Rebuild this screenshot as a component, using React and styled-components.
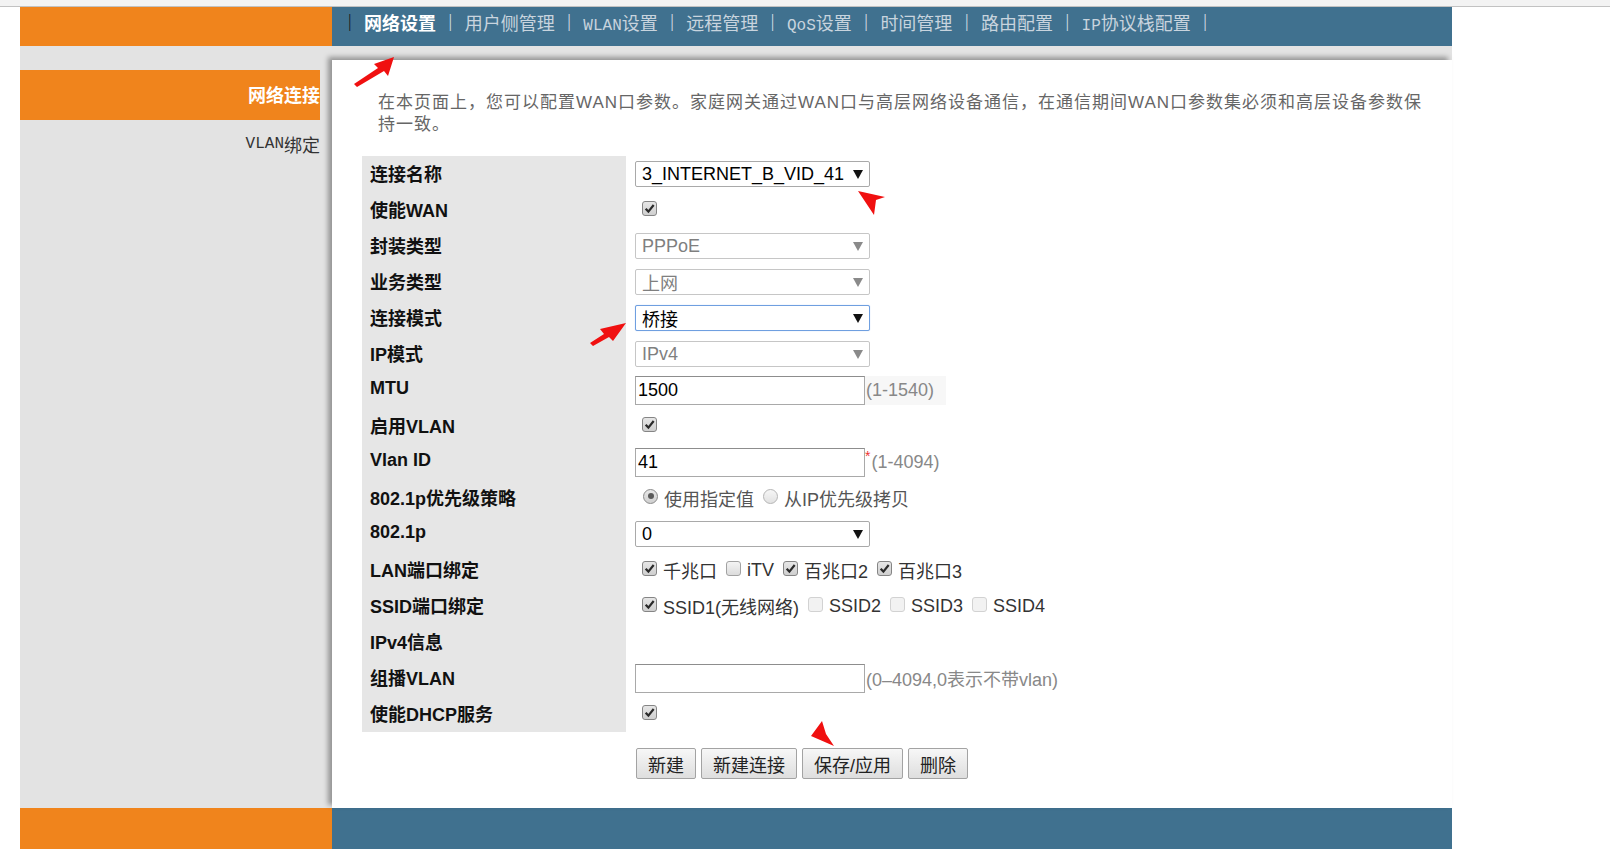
import React from 'react';
import styled, { createGlobalStyle, css } from 'styled-components';

const ORANGE = '#f0841c';
const BLUE = '#40718f';
const GREY = '#e3e3e3';
const SANS = `"Liberation Sans", "Noto Sans CJK SC", sans-serif`;
const SONG = `"Liberation Serif", "Noto Sans CJK SC", serif`;

const GlobalStyle = createGlobalStyle`
  html, body {
    margin: 0;
    padding: 0;
    background: #fff;
    overflow: hidden;
  }
  body {
    font-family: ${SANS};
  }
`;

const TopStrip = styled.div`
  height: 6px;
  background: #f3f3f3;
  border-bottom: 1px solid #c2c2c2;
`;

const Frame = styled.div`
  width: 1432px;
  margin-left: 20px;
`;

const Header = styled.div`
  display: grid;
  grid-template-columns: 312px 1120px;
  height: 39px;
`;

const Brand = styled.div`
  background: ${ORANGE};
`;

const Nav = styled.div`
  background: ${BLUE};
  display: flex;
  align-items: center;
  gap: 12.5px;
  padding: 0 0 10px 16px;
  font-family: ${SONG};
  font-size: 18px;
  color: #c8d4de;
  white-space: nowrap;
`;

const Sep = styled.span`
  color: ${(p) => (p.$dark ? '#1c1c1c' : '#d6dee5')};
`;

const NavItem = styled.span`
  ${(p) =>
    p.$active &&
    css`
      color: #fff;
      font-weight: bold;
    `}
`;

// SimSun-like half width latin
const Half = styled.span`
  font-family: "Liberation Mono", monospace;
  font-size: 16px;
`;

const Body = styled.div`
  position: relative;
  display: grid;
  grid-template-columns: 312px 1120px;
  height: 762px;
`;

const Sidebar = styled.div`
  background: ${GREY};
  padding-top: 24px;
`;

const SideLink = styled.div`
  width: 300px;
  height: 50px;
  box-sizing: border-box;
  padding-bottom: 3px;
  display: flex;
  align-items: center;
  justify-content: flex-end;
  overflow: hidden;
  font-family: ${SONG};
  font-size: 18px;
  color: #333;
  ${(p) =>
    p.$active &&
    css`
      background: ${ORANGE};
      color: #fff;
      font-weight: bold;
    `}
`;

const Main = styled.div`
  background: ${GREY};
  padding-top: 14px;
  display: flex;
  flex-direction: column;
`;

const Panel = styled.div`
  flex: 1;
  background: #fff;
  box-shadow: -4px -3px 5px rgba(0, 0, 0, 0.35);
  padding: 32px 30px 0 30px;
`;

const Intro = styled.p`
  margin: 0 0 20px;
  padding-left: 16px;
  width: 1050px;
  font-size: 17px;
  letter-spacing: 1px;
  line-height: 22px;
  color: #666;
`;

const FormGrid = styled.div`
  display: grid;
  grid-template-columns: 264px 700px;
  grid-auto-rows: 36px;
`;

const Label = styled.div`
  background: #e6e6e6;
  display: flex;
  align-items: center;
  padding: 0 0 3px 8px;
  font-size: 18px;
  font-weight: bold;
  color: #111;
`;

const Value = styled.div`
  display: flex;
  align-items: center;
  padding-left: 9px;
  font-size: 18px;
  color: #333;
  white-space: nowrap;
`;

const selectState = {
  normal: css`
    border-color: #a9a9a9;
    color: #000;
  `,
  disabled: css`
    border-color: #c6c6c6;
    color: #7f7f7f;
  `,
  focus: css`
    border-color: #6f9fe0;
    box-shadow: 0 0 1px #9fc1f0;
    color: #000;
  `,
};

const SelectBox = styled.div`
  box-sizing: border-box;
  width: 235px;
  height: 26px;
  border: 1px solid;
  border-radius: 2px;
  padding: 0 6px 0 6px;
  display: flex;
  align-items: center;
  justify-content: space-between;
  background: #fff;
  ${(p) => selectState[p.$state || 'normal']}
`;

const Caret = ({ color }) => (
  <svg width="10" height="9" viewBox="0 0 10 9">
    <polygon points="0,0 10,0 5,9" fill={color} />
  </svg>
);

const Select = ({ value, state = 'normal' }) => (
  <SelectBox $state={state}>
    <span>{value}</span>
    <Caret color={state === 'disabled' ? '#8a8a8a' : '#111'} />
  </SelectBox>
);

const TextInput = styled.input`
  box-sizing: border-box;
  width: 230px;
  height: 29px;
  margin: 0;
  padding: 0 2px;
  border: 1px solid #a9a9a9;
  border-top-color: #8d8d8d;
  font-family: ${SANS};
  font-size: 18px;
  color: #000;
  outline: none;
`;

const Hint = styled.span`
  display: inline-flex;
  align-items: center;
  height: 29px;
  padding: 0 12px 0 1px;
  color: #888;
  background: ${(p) => (p.$shade ? '#f7f7f7' : 'transparent')};
`;

const Star = styled.span`
  color: #e33;
  font-size: 14px;
  align-self: flex-start;
  margin-top: 4px;
`;

const Choices = styled.div`
  display: flex;
  align-items: center;
  padding-left: ${(p) => p.$indent || 7}px;
`;

const ChoiceText = styled.span`
  margin: 0 9px 0 6px;
  color: ${(p) => (p.$muted ? '#555' : '#333')};
`;

const boxLook = {
  on: css`
    border-color: #858585;
    background: linear-gradient(#e6e6e6, #cfcfcf);
  `,
  off: css`
    border-color: #a2a2a2;
    background: linear-gradient(#f4f4f4, #dcdcdc);
  `,
  disabled: css`
    border-color: #d2d2d2;
    background: #f2f2f2;
  `,
};

const Box = styled.span`
  box-sizing: border-box;
  width: 15px;
  height: 15px;
  border: 1px solid;
  border-radius: 3px;
  display: inline-flex;
  align-items: center;
  justify-content: center;
  flex: none;
  margin-top: -4px;
  ${(p) => boxLook[p.$look]}
`;

const Check = ({ look = 'on' }) => (
  <Box $look={look}>
    {look === 'on' && (
      <svg width="11" height="11" viewBox="0 0 10 10">
        <path d="M1.5 5.2 L4 7.8 L8.8 1.8" stroke="#2a2a2a" strokeWidth="2" fill="none" />
      </svg>
    )}
  </Box>
);

const Round = styled.span`
  box-sizing: border-box;
  width: 15px;
  height: 15px;
  border-radius: 50%;
  border: 1px solid ${(p) => (p.$on ? '#8a8a8a' : '#b5b5b5')};
  background: ${(p) => (p.$on ? 'linear-gradient(#e8e8e8, #cfcfcf)' : 'linear-gradient(#f6f6f6, #e2e2e2)')};
  display: inline-flex;
  align-items: center;
  justify-content: center;
  flex: none;
  margin-top: -4px;
  &::after {
    content: '';
    display: ${(p) => (p.$on ? 'block' : 'none')};
    width: 6px;
    height: 6px;
    border-radius: 50%;
    background: #5a5a5a;
  }
`;

const Actions = styled.div`
  display: flex;
  gap: 5px;
  margin: 16px 0 0 274px;
`;

const Button = styled.button`
  height: 31px;
  padding: 0 11px;
  border: 1px solid #a3a3a3;
  border-radius: 2px;
  background: linear-gradient(#f7f7f7, #dedede);
  font-family: ${SANS};
  font-size: 18px;
  color: #222;
`;

const Footer = styled.div`
  display: grid;
  grid-template-columns: 312px 1120px;
  height: 41px;
`;

const FootLeft = styled.div`
  background: ${ORANGE};
`;

const FootRight = styled.div`
  background: ${BLUE};
`;

// red annotation arrows drawn over the page
const Marker = styled.svg`
  position: absolute;
  left: ${(p) => p.$left}px;
  top: ${(p) => p.$top}px;
  pointer-events: none;
`;

const NAV = [
  ['网络设置'],
  ['用户侧管理'],
  ['WLAN', '设置'],
  ['远程管理'],
  ['QoS', '设置'],
  ['时间管理'],
  ['路由配置'],
  ['IP', '协议栈配置'],
];

const renderNavText = (parts) =>
  parts.length === 2 ? (
    <>
      <Half>{parts[0]}</Half>
      {parts[1]}
    </>
  ) : (
    parts[0]
  );

export default function App() {
  return (
    <>
      <GlobalStyle />
      <TopStrip />
      <Frame>
        <Header>
          <Brand />
          <Nav>
            <Sep $dark>|</Sep>
            {NAV.map((parts, i) => (
              <React.Fragment key={i}>
                <NavItem $active={i === 0}>{renderNavText(parts)}</NavItem>
                <Sep>|</Sep>
              </React.Fragment>
            ))}
          </Nav>
        </Header>

        <Body>
          <Sidebar>
            <SideLink $active>网络连接</SideLink>
            <SideLink>
              <Half>VLAN</Half>绑定
            </SideLink>
          </Sidebar>

          <Main>
            <Panel>
              <Intro>
                在本页面上，您可以配置WAN口参数。家庭网关通过WAN口与高层网络设备通信，在通信期间WAN口参数集必须和高层设备参数保持一致。
              </Intro>

              <FormGrid>
                <Label>连接名称</Label>
                <Value>
                  <Select value="3_INTERNET_B_VID_41" />
                </Value>

                <Label>使能WAN</Label>
                <Value>
                  <Choices>
                    <Check />
                  </Choices>
                </Value>

                <Label>封装类型</Label>
                <Value>
                  <Select value="PPPoE" state="disabled" />
                </Value>

                <Label>业务类型</Label>
                <Value>
                  <Select value="上网" state="disabled" />
                </Value>

                <Label>连接模式</Label>
                <Value>
                  <Select value="桥接" state="focus" />
                </Value>

                <Label>IP模式</Label>
                <Value>
                  <Select value="IPv4" state="disabled" />
                </Value>

                <Label>MTU</Label>
                <Value>
                  <TextInput readOnly defaultValue="1500" />
                  <Hint $shade>(1-1540)</Hint>
                </Value>

                <Label>启用VLAN</Label>
                <Value>
                  <Choices>
                    <Check />
                  </Choices>
                </Value>

                <Label>Vlan ID</Label>
                <Value>
                  <TextInput readOnly defaultValue="41" />
                  <Star>*</Star>
                  <Hint>(1-4094)</Hint>
                </Value>

                <Label>802.1p优先级策略</Label>
                <Value>
                  <Choices $indent={8}>
                    <Round $on />
                    <ChoiceText $muted>使用指定值</ChoiceText>
                    <Round />
                    <ChoiceText $muted>从IP优先级拷贝</ChoiceText>
                  </Choices>
                </Value>

                <Label>802.1p</Label>
                <Value>
                  <Select value="0" />
                </Value>

                <Label>LAN端口绑定</Label>
                <Value>
                  <Choices>
                    <Check />
                    <ChoiceText>千兆口</ChoiceText>
                    <Check look="off" />
                    <ChoiceText>iTV</ChoiceText>
                    <Check />
                    <ChoiceText>百兆口2</ChoiceText>
                    <Check />
                    <ChoiceText>百兆口3</ChoiceText>
                  </Choices>
                </Value>

                <Label>SSID端口绑定</Label>
                <Value>
                  <Choices>
                    <Check />
                    <ChoiceText>SSID1(无线网络)</ChoiceText>
                    <Check look="disabled" />
                    <ChoiceText>SSID2</ChoiceText>
                    <Check look="disabled" />
                    <ChoiceText>SSID3</ChoiceText>
                    <Check look="disabled" />
                    <ChoiceText>SSID4</ChoiceText>
                  </Choices>
                </Value>

                <Label>IPv4信息</Label>
                <Value />

                <Label>组播VLAN</Label>
                <Value>
                  <TextInput readOnly defaultValue="" />
                  <Hint>(0–4094,0表示不带vlan)</Hint>
                </Value>

                <Label>使能DHCP服务</Label>
                <Value>
                  <Choices>
                    <Check />
                  </Choices>
                </Value>
              </FormGrid>

              <Actions>
                <Button>新建</Button>
                <Button>新建连接</Button>
                <Button>保存/应用</Button>
                <Button>删除</Button>
              </Actions>
            </Panel>
          </Main>

          <Marker $left={334} $top={11} width="41" height="30" viewBox="0 0 41 30">
            <polygon points="0,27 24,11 20,7 40,0 34,19 30,14 3,30" fill="#f01010" />
          </Marker>
          <Marker $left={838} $top={145} width="27" height="24" viewBox="0 0 27 24">
            <polygon points="0,0 27,6 18,9 16,24" fill="#f01010" />
          </Marker>
          <Marker $left={570} $top={277} width="36" height="23" viewBox="0 0 36 23">
            <polygon points="0,20 14,11 10,6 36,0 23,18 19,14 3,23" fill="#f01010" />
          </Marker>
          <Marker $left={791} $top={675} width="24" height="25" viewBox="0 0 24 25">
            <polygon points="11,0 0,15 23,25 15,13" fill="#f01010" />
          </Marker>
        </Body>

        <Footer>
          <FootLeft />
          <FootRight />
        </Footer>
      </Frame>
    </>
  );
}
